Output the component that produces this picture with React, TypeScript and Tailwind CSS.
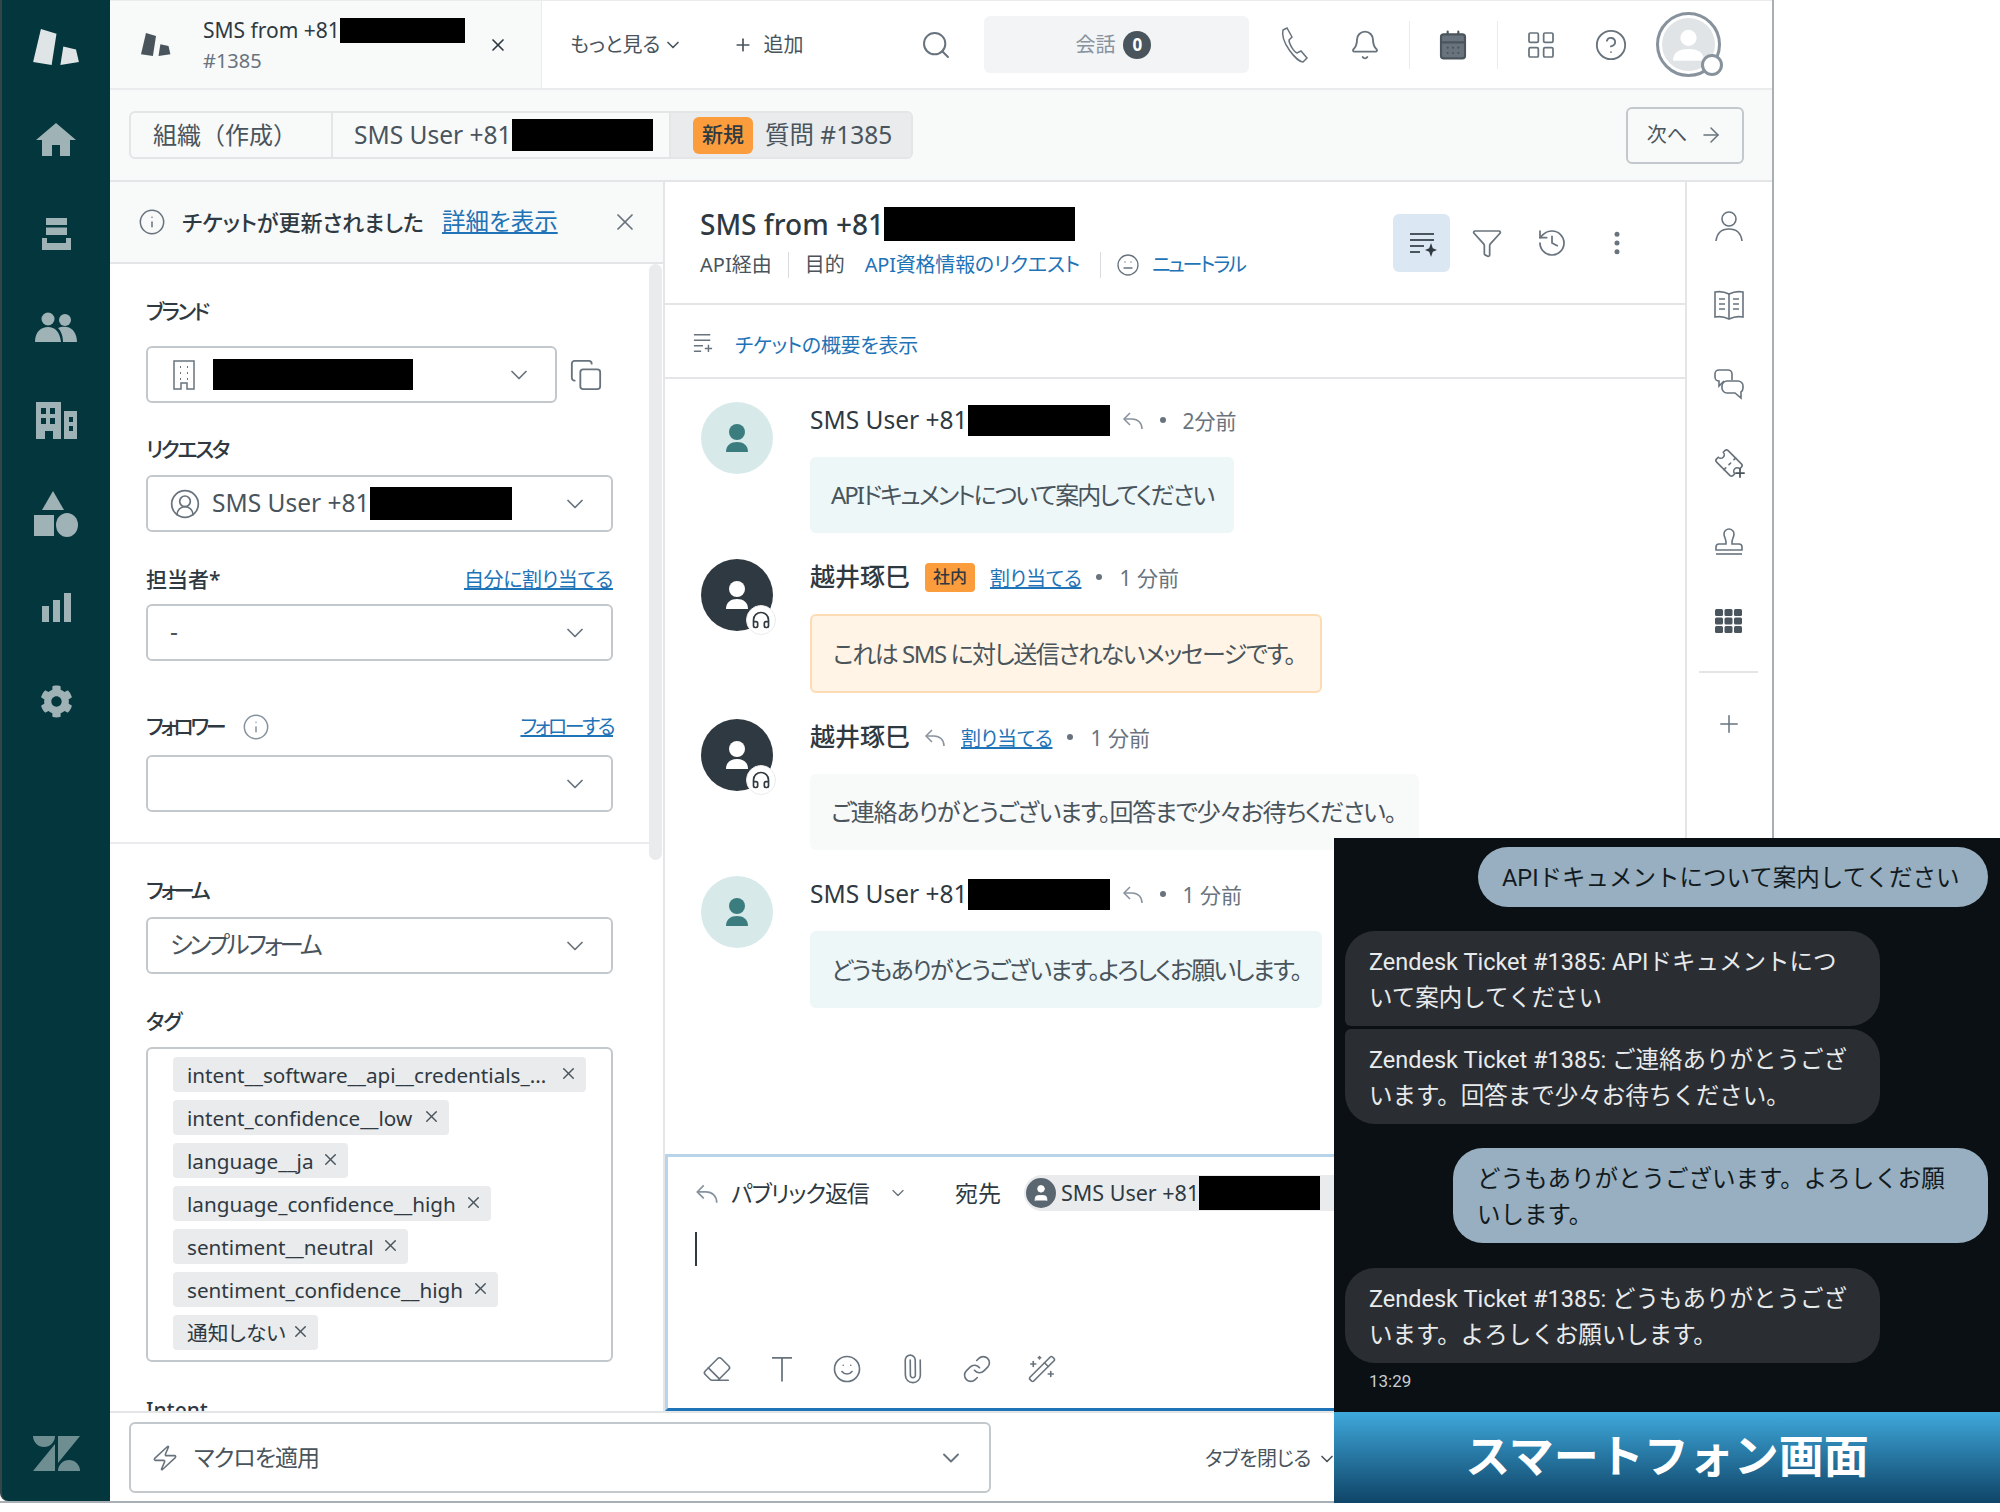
import {
  ArrowRight,
  Bell,
  CalendarDays,
  ChevronDown,
  CircleHelp,
  CircleUserRound,
  Copy,
  Eraser,
  Filter,
  Headphones,
  History,
  Info,
  LayoutGrid,
  Link,
  Meh,
  MoreVertical,
  Paperclip,
  Plus,
  Search,
  Smile,
  Ticket,
  User,
  WandSparkles,
  X,
  Zap,
} from "lucide-react";
import { FaCog } from "react-icons/fa";

const Redact = ({ w, h }: { w: number; h: number }) => (
  <span className="block shrink-0 bg-black" style={{ width: w, height: h }} />
);

// support product logo (two slanted blocks)
const SupportLogo = ({ className }: { className: string }) => (
  <svg viewBox="33 27 48 39" className={className} fill="currentColor">
    <polygon points="41,28 57,33 52,65 33,62" />
    <polygon points="64,46 77,49 80,62 61,65" />
  </svg>
);

function Sidebar() {
  const slot = "h-[93.5px] flex items-center justify-center text-[#9fb2b5]";
  return (
    <aside className="w-[110px] shrink-0 flex flex-col bg-[#03363d] border-l-2 border-[#33474b] rounded-bl-lg">
      <div className={slot}>
        <SupportLogo className="w-[47px] h-[38px] text-[#dfe5e6]" />
      </div>
      <div className={slot}>
        <svg viewBox="0 0 40 34" className="w-[40px] h-[34px]" fill="currentColor">
          <path d="M20 0 40 17H34V33H24V22H16V33H6V17H0Z" />
        </svg>
      </div>
      <div className={slot}>
        <svg viewBox="0 0 29 32" className="w-[29px] h-[32px]" fill="currentColor">
          <path d="M4 0H25V7H4ZM4 9.5H25V17H4ZM0 20H5V25H24V20H29V32H0Z" />
        </svg>
      </div>
      <div className={slot}>
        <svg viewBox="0 0 42 30" className="w-[42px] h-[30px]" fill="currentColor">
          <circle cx="13" cy="7" r="6.5" />
          <circle cx="30" cy="8" r="6" />
          <path d="M0 30C0 20 6 15 13 15S25 20 26 30ZM28 30C28 24 26 19 23 16C26 14.500 29 14.500 32 15C38 16 42 22 42 30Z" />
        </svg>
      </div>
      <div className={slot}>
        <svg viewBox="0 0 41 37" className="w-[41px] h-[37px]" fill="currentColor" fillRule="evenodd">
          <path d="M0 0H25V37H17V29H9V37H0ZM5 6V12H10V6ZM14 6V12H19V6ZM5 16V22H10V16ZM14 16V22H19V16Z" />
          <path d="M28 9H41V37H28ZM33 15V20H37V15ZM33 24V29H37V24Z" />
        </svg>
      </div>
      <div className={slot}>
        <svg viewBox="0 0 44 46" className="w-[44px] h-[46px]" fill="currentColor">
          <path d="M19 0 30 19H8Z" />
          <rect x="0" y="24" width="20" height="21" />
          <ellipse cx="33" cy="34" rx="11" ry="12" />
        </svg>
      </div>
      <div className={slot}>
        <svg viewBox="0 0 29 29" className="w-[29px] h-[29px]" fill="currentColor">
          <rect x="0" y="13" width="7" height="16" />
          <rect x="11" y="7" width="7" height="22" />
          <rect x="22" y="0" width="7" height="29" />
        </svg>
      </div>
      <div className={slot}>
        <FaCog className="w-[33px] h-[33px]" />
      </div>
      <div className="mt-auto mb-[30px] flex justify-center text-[#6f8e92]">
        <svg viewBox="0 0 47 35" className="w-[47px] h-[35px]" fill="currentColor">
          <path d="M0 0H22A11 11 0 0 1 0 0Z" />
          <path d="M25 0H47L25 27Z" />
          <path d="M22 8V35H0Z" />
          <path d="M25 35A11 11 0 0 1 47 35Z" />
        </svg>
      </div>
    </aside>
  );
}

function Header() {
  const ic = "text-[#68737d]";
  return (
    <header className="h-[90px] shrink-0 flex border-t border-[#e9ebed]">
      <div className="w-[431px] shrink-0 flex items-center bg-[#f8f9f9] border-b-2 border-[#e9ebed]">
        <SupportLogo className="ml-[31px] w-[30px] h-[25px] text-[#49545c]" />
        <div className="ml-[32px] w-[270px]">
          <div className="h-[32px] flex items-center text-[21px] text-[#2f3941] whitespace-nowrap">
            SMS from +81
            <Redact w={125} h={25} />
          </div>
          <div className="text-[20px] leading-[28px] text-[#68737d]">#1385</div>
        </div>
        <X className="ml-[15px] w-[20px] h-[20px] text-[#2f3941]" />
      </div>
      <div className="flex-1 flex items-center bg-white border-b-2 border-[#e9ebed] border-l border-l-[#e9ebed]">
        <span className="ml-[28px] text-[20px] text-[#49545c]">もっと見る</span>
        <ChevronDown className="ml-[3px] w-[20px] h-[20px] text-[#49545c]" />
        <Plus className="ml-[50px] w-[20px] h-[20px] text-[#49545c]" />
        <span className="ml-[10px] text-[20px] text-[#49545c]">追加</span>
        <Search className={`ml-[117px] w-[32px] h-[32px] ${ic}`} strokeWidth={1.5} />
        <div className="ml-[32px] w-[265px] h-[57px] rounded-md bg-[#f3f4f5] flex items-center">
          <span className="ml-[91px] text-[20px] text-[#87929d]">会話</span>
          <span className="ml-[8px] w-[28px] h-[28px] rounded-full bg-[#49545c] text-white text-[17px] font-bold flex items-center justify-center">
            0
          </span>
        </div>
        <svg viewBox="0 0 32 36" className={`ml-[28px] w-[32px] h-[36px] ${ic}`} fill="none" stroke="currentColor" strokeWidth="1.5">
          <path d="M6 3 10 1 15 10 12 13C12 17 17 25 20 26L24 24 30 31 26 35C20 35 3 15 6 3Z" />
        </svg>
        <Bell className={`ml-[40px] w-[32px] h-[32px] ${ic}`} strokeWidth={1.4} />
        <span className="ml-[28px] w-px h-[48px] bg-[#e9ebed]" />
        <CalendarDays className="ml-[27px] w-[32px] h-[32px] text-[#49545c] fill-[#68737d]" strokeWidth={1.6} />
        <span className="ml-[28px] w-px h-[48px] bg-[#e9ebed]" />
        <LayoutGrid className={`ml-[27px] w-[32px] h-[32px] ${ic}`} strokeWidth={1.3} />
        <CircleHelp className={`ml-[37px] w-[34px] h-[34px] ${ic}`} strokeWidth={1.3} />
        <div className="relative ml-[28px] w-[65px] h-[65px] rounded-full border-[3px] border-[#87929d] p-[3px]">
          <div className="w-full h-full rounded-full bg-[#e1e4e6] flex items-center justify-center overflow-hidden">
            <svg viewBox="0 0 72 72" className="w-[53px] h-[53px]" fill="#fff">
              <circle cx="36" cy="27" r="11" />
              <path d="M15 58C15 46 24 42 36 42S57 46 57 58Z" />
            </svg>
          </div>
          <span className="absolute right-[-5px] bottom-[-2px] w-[22px] h-[22px] rounded-full bg-white border-[3px] border-[#87929d]" />
        </div>
      </div>
    </header>
  );
}

function Crumbs() {
  return (
    <div className="h-[92px] shrink-0 flex items-center justify-between bg-[#f8f9f9] border-b-2 border-[#e3e5e7] pl-[19px] pr-[28px]">
      <div className="flex h-[48px] w-[784px] border-2 border-[#e3e5e7] rounded-md overflow-hidden bg-[#f8f9f9] text-[24.500px] text-[#49545c] whitespace-nowrap">
        <div className="w-[202px] pl-[22px] flex items-center border-r-2 border-[#e3e5e7] text-[24px] [font-feature-settings:normal]">組織（作成）</div>
        <div className="w-[338px] pl-[21px] flex items-center border-r-2 border-[#e3e5e7]">
          SMS User +81
          <Redact w={141} h={32} />
        </div>
        <div className="flex-1 flex items-center bg-[#e9ebed] pl-[22px]">
          <span className="w-[60px] h-[37px] rounded-md bg-[#fb9d3c] text-[#2f3941] text-[21px] font-medium flex items-center justify-center">
            新規
          </span>
          <span className="ml-[12px]">質問 #1385</span>
        </div>
      </div>
      <div className="w-[118px] h-[57px] rounded-md border-2 border-[#c2c8cc] flex items-center justify-center gap-[12px] text-[20px] text-[#49545c]">
        次へ
        <ArrowRight className="w-[24px] h-[24px] text-[#68737d]" strokeWidth={1.5} />
      </div>
    </div>
  );
}

function Label({ children, right, rightClass }: { children: React.ReactNode; right?: string; rightClass?: string }) {
  return (
    <div className="h-[28px] w-[467px] flex items-center justify-between text-[21px] font-medium text-[#2f3941]">
      <div className="flex items-center">{children}</div>
      {right && <a className={`text-[20px] font-normal text-[#1f73b7] underline ${rightClass}`}>{right}</a>}
    </div>
  );
}

function Select({ className, children }: { className: string; children?: React.ReactNode }) {
  return (
    <div className={`${className} h-[57px] rounded-md border-2 border-[#c2c8cc] bg-white flex items-center pr-[22px] text-[24.500px] text-[#49545c]`}>
      <div className="flex-1 flex items-center min-w-0">{children}</div>
      <ChevronDown className="w-[28px] h-[28px] text-[#68737d]" strokeWidth={1.5} />
    </div>
  );
}

const tags = [
  ["intent__software__api__credentials_...", 413],
  ["intent_confidence__low", 276],
  ["language__ja", 175],
  ["language_confidence__high", 318],
  ["sentiment__neutral", 235],
  ["sentiment_confidence__high", 325],
  ["通知しない", 145],
] as const;

function LeftPanel() {
  return (
    <div className="w-[555px] shrink-0 flex flex-col border-r-2 border-[#e3e5e7]">
      <div className="h-[82px] shrink-0 flex items-center bg-[#f8f9f9] border-b-2 border-[#e3e5e7]">
        <Info className="ml-[28px] w-[28px] h-[28px] text-[#68737d]" strokeWidth={1.3} />
        <span className="ml-[16px] w-[244px] whitespace-nowrap text-[22px] font-medium text-[#2f3941]">
          チケットが更新されました
        </span>
        <a className="ml-[16px] text-[23.500px] text-[#1f73b7] underline">詳細を表示</a>
        <X className="ml-[53px] w-[28px] h-[28px] text-[#68737d]" strokeWidth={1.5} />
      </div>
      <div className="relative flex-1 overflow-hidden">
        <span className="absolute right-[1px] top-0 w-[13px] h-[596px] rounded-full bg-[#e9ebed]" />
        <div className="pl-[36px]">
          <div className="mt-[34px] tracking-[-2.6px]">
            <Label>ブランド</Label>
          </div>
          <div className="mt-[20px] flex items-center">
            <Select className="w-[411px] pl-[25px]">
              <svg viewBox="0 0 22 30" className="w-[22px] h-[30px] text-[#68737d]" fill="none" stroke="currentColor" strokeWidth="1.5">
                <path d="M1 1H21V29H14V23H8V29H1Z" />
                <path d="M7 7H8M14 7H15M7 13H8M14 13H15M7 19H8M14 19H15" strokeWidth="2" />
              </svg>
              <span className="ml-[18px]">
                <Redact w={200} h={31} />
              </span>
            </Select>
            <Copy className="ml-[12px] w-[34px] h-[34px] text-[#68737d]" strokeWidth={1.3} />
          </div>
          <div className="mt-[33px] tracking-[-2.3px]">
            <Label>リクエスタ</Label>
          </div>
          <div className="mt-[11px]">
            <Select className="w-[467px] pl-[21px]">
              <CircleUserRound className="w-[32px] h-[32px] text-[#68737d]" strokeWidth={1.3} />
              <span className="ml-[11px] whitespace-nowrap flex items-center">
                SMS User +81
                <Redact w={142} h={33} />
              </span>
            </Select>
          </div>
          <div className="mt-[34px]">
            <Label right="自分に割り当てる" rightClass="tracking-[-0.4px]">担当者*</Label>
          </div>
          <div className="mt-[10px]">
            <Select className="w-[467px] pl-[22px]">-</Select>
          </div>
          <div className="mt-[52px]">
            <Label right="フォローする" rightClass="tracking-[-2.5px]">
              <span className="tracking-[-3.3px]">フォロワー</span>
              <Info className="ml-[19px] w-[28px] h-[28px] text-[#87929d]" strokeWidth={1.3} />
            </Label>
          </div>
          <div className="mt-[14px]">
            <Select className="w-[467px]" />
          </div>
        </div>
        <div className="mt-[30px] mr-[14px] h-[2px] bg-[#e9ebed]" />
        <div className="pl-[36px]">
          <div className="mt-[33px] tracking-[-3px]">
            <Label>フォーム</Label>
          </div>
          <div className="mt-[12px]">
            <Select className="w-[467px] pl-[22px]">
              <span className="tracking-[-3.2px]">シンプルフォーム</span>
            </Select>
          </div>
          <div className="mt-[34px] tracking-[-1px]">
            <Label>タグ</Label>
          </div>
          <div className="mt-[11px] w-[467px] h-[315px] rounded-md border-2 border-[#c2c8cc] pt-[8px] pl-[25px] flex flex-col items-start gap-[8px]">
            {tags.map(([t, w]) => (
              <div
                key={t}
                className="h-[35px] rounded bg-[#e9ebed] pl-[14px] pr-[8px] flex items-center justify-between text-[20.700px] text-[#2f3941] whitespace-nowrap"
                style={{ width: w }}
              >
                <span className="pt-[2px]">{t}</span>
                <X className="w-[19px] h-[19px] mb-[3px] text-[#49545c]" strokeWidth={1.8} />
              </div>
            ))}
          </div>
          <div className="mt-[35px]">
            <Label>Intent</Label>
          </div>
        </div>
      </div>
    </div>
  );
}

const ReplyIcon = ({ className }: { className: string }) => (
  <svg viewBox="0 0 24 24" className={className} fill="none" stroke="currentColor" strokeWidth="1.5">
    <path d="M9 5 3 11 9 17" />
    <path d="M3 11H11C17 11 21 15 21 21" />
  </svg>
);

function Avatar({ agent }: { agent?: boolean }) {
  return (
    <div className={`relative w-[72px] h-[72px] shrink-0 rounded-full ${agent ? "bg-[#2f3941]" : "bg-[#d7e9e9]"}`}>
      <svg viewBox="0 0 72 72" className="w-[72px] h-[72px]" fill={agent ? "#fff" : "#3b7d7f"}>
        <circle cx="36" cy="30" r="8" />
        <path d="M25 50C25 43 30 40 36 40S47 43 47 50Z" />
      </svg>
      {agent && (
        <span className="absolute left-[45px] top-[46px] w-[30px] h-[30px] rounded-full bg-white border border-[#e9ebed] flex items-center justify-center">
          <Headphones className="w-[20px] h-[20px] text-[#2f3941]" strokeWidth={2} />
        </span>
      )}
    </div>
  );
}

function Dot() {
  return <span className="block w-[6px] h-[6px] rounded-full bg-[#68737d]" />;
}

function Message({ agent, head, bubble, height, width, text, tr }: {
  agent?: boolean;
  head: React.ReactNode;
  bubble: string;
  height: number;
  width: number;
  text: string;
  tr: string;
}) {
  return (
    <div className="flex">
      <Avatar agent={agent} />
      <div className="ml-[37px]">
        <div className="h-[36px] flex items-center text-[24.500px] text-[#2f3941] whitespace-nowrap">{head}</div>
        <div
          className={`mt-[19px] flex items-center pl-[21px] rounded-md text-[24px] text-[#49545c] whitespace-nowrap ${bubble}`}
          style={{ height, width }}
        >
          <span className={tr}>{text}</span>
        </div>
      </div>
    </div>
  );
}

const Assign = () => <a className="text-[20px] text-[#1f73b7] underline tracking-[-0.3px]">割り当てる</a>;
const Ago = ({ t }: { t: string }) => <span className="text-[21px] text-[#68737d]">{t}</span>;

function Middle() {
  return (
    <div className="flex-1 min-w-0 flex flex-col">
      <div className="h-[123px] shrink-0 flex items-center justify-between border-b-2 border-[#e3e5e7]">
        <div className="pl-[35px]">
          <div className="h-[36px] flex items-center text-[28px] font-medium text-[#2f3941] whitespace-nowrap">
            SMS from +81
            <Redact w={191} h={34} />
          </div>
          <div className="mt-[9px] h-[28px] flex items-center text-[20px] text-[#49545c] whitespace-nowrap">
            API経由
            <span className="mx-[16px] w-px h-[26px] bg-[#d8dcde]" />
            目的
            <a className="ml-[20px] text-[#1f73b7] tracking-[-0.2px]">API資格情報のリクエスト</a>
            <span className="ml-[20px] mr-[15px] w-px h-[26px] bg-[#d8dcde]" />
            <Meh className="w-[24px] h-[24px] text-[#68737d]" strokeWidth={1.3} />
            <a className="ml-[12px] text-[#1f73b7] tracking-[-2.3px]">ニュートラル</a>
          </div>
        </div>
        <div className="flex items-center pr-[36px]">
          <div className="w-[65px] flex justify-center">
            <div className="w-[57px] h-[58px] rounded-md bg-[#dbe7f2] flex items-center justify-center">
              <svg viewBox="0 0 30 30" className="w-[30px] h-[30px]" stroke="#49545c" strokeWidth="2" fill="none">
                <path d="M3 6H27M3 12H27M3 18H17M3 24H13" />
                <path d="M24 15 25.800 20.200 30 22 25.800 23.800 24 29 22.200 23.800 18 22 22.200 20.200Z" fill="#2f3941" stroke="none" />
              </svg>
            </div>
          </div>
          <div className="w-[65px] flex justify-center">
            <Filter className="w-[32px] h-[32px] text-[#68737d]" strokeWidth={1.3} />
          </div>
          <div className="w-[65px] flex justify-center">
            <History className="w-[32px] h-[32px] text-[#68737d]" strokeWidth={1.3} />
          </div>
          <div className="w-[65px] flex justify-center">
            <MoreVertical className="w-[30px] h-[30px] text-[#68737d]" strokeWidth={2} />
          </div>
        </div>
      </div>
      <div className="h-[74px] shrink-0 flex items-center border-b-2 border-[#e3e5e7] pl-[28px] pt-[9px]">
        <svg viewBox="0 0 22 24" className="w-[20px] h-[22px] mb-[6px]" stroke="#68737d" strokeWidth="1.6" fill="none">
          <path d="M1 3H19M1 9H19M1 15H11M1 21H9M17 14V22M13 18H21" />
        </svg>
        <a className="ml-[22px] text-[20px] text-[#1f73b7] tracking-[-0.3px]">チケットの概要を表示</a>
      </div>
      <div className="flex-1 min-h-0 overflow-hidden pl-[36px] pt-[23px] flex flex-col gap-[26px]">
        <Message
          head={
            <>
              SMS User +81
              <Redact w={142} h={31} />
              <ReplyIcon className="ml-[11px] w-[24px] h-[24px] text-[#87929d]" />
              <span className="ml-[15px]"><Dot /></span>
              <span className="ml-[17px]"><Ago t="2分前" /></span>
            </>
          }
          bubble="bg-[#edf7f8]"
          height={76}
          width={424}
          tr="tracking-[-2px]"
          text="APIドキュメントについて案内してください"
        />
        <Message
          agent
          head={
            <>
              <span className="text-[25px] font-medium">越井琢巳</span>
              <span className="ml-[15px] w-[50px] h-[29px] rounded bg-[#fb9d3c] text-[17px] text-[#2f3941] font-medium flex items-center justify-center">
                社内
              </span>
              <span className="ml-[15px]"><Assign /></span>
              <span className="ml-[15px]"><Dot /></span>
              <span className="ml-[17px]"><Ago t="1 分前" /></span>
            </>
          }
          bubble="bg-[#fff4e5] border-2 border-[#fcdcb4]"
          height={79}
          width={512}
          tr="tracking-[-1.5px]"
          text="これは SMS に対し送信されないメッセージです。"
        />
        <Message
          agent
          head={
            <>
              <span className="text-[25px] font-medium">越井琢巳</span>
              <ReplyIcon className="ml-[13px] w-[24px] h-[24px] text-[#87929d]" />
              <span className="ml-[14px]"><Assign /></span>
              <span className="ml-[15px]"><Dot /></span>
              <span className="ml-[17px]"><Ago t="1 分前" /></span>
            </>
          }
          bubble="bg-[#f8f9f9]"
          height={76}
          width={609}
          tr="tracking-[-1.3px]"
          text="ご連絡ありがとうございます。回答まで少々お待ちください。"
        />
        <Message
          head={
            <>
              SMS User +81
              <Redact w={142} h={31} />
              <ReplyIcon className="ml-[11px] w-[24px] h-[24px] text-[#87929d]" />
              <span className="ml-[15px]"><Dot /></span>
              <span className="ml-[17px]"><Ago t="1 分前" /></span>
            </>
          }
          bubble="bg-[#edf7f8]"
          height={77}
          width={512}
          tr="tracking-[-1.8px]"
          text="どうもありがとうございます。よろしくお願いします。"
        />
      </div>
      <div className="h-[257px] shrink-0 border-[3px] border-[#b9d4e9] border-b-[#1f73b7] bg-white">
        <div className="mt-[18px] h-[36px] flex items-center pl-[26px] text-[23px] text-[#2f3941] whitespace-nowrap">
          <ReplyIcon className="w-[26px] h-[26px] text-[#87929d]" />
          <span className="ml-[11px] w-[137px] tracking-[-1.1px]">パブリック返信</span>
          <ChevronDown className="ml-[20px] w-[20px] h-[20px] text-[#68737d]" strokeWidth={1.6} />
          <span className="ml-[47px] w-[50px]">宛先</span>
          <div className="ml-[19px] h-[36px] w-[340px] rounded-full bg-[#e9ebed] flex items-center pl-[2px] text-[21.500px]">
            <span className="w-[30px] h-[30px] rounded-full bg-[#5b6770] flex items-center justify-center">
              <User className="w-[20px] h-[20px] text-white fill-white" strokeWidth={1} />
            </span>
            <span className="ml-[5px]">SMS User +81</span>
            <Redact w={121} h={34} />
          </div>
        </div>
        <div className="ml-[27px] mt-[21px] w-[2px] h-[34px] bg-[#2f3941]" />
        <div className="mt-[88px] ml-[16px] flex">
          <div className="w-[65px] flex justify-center">
            <Eraser className="w-[30px] h-[30px] text-[#68737d]" strokeWidth={1.3} />
          </div>
          <div className="w-[65px] flex justify-center">
            <svg viewBox="0 0 24 24" className="w-[30px] h-[30px] text-[#68737d]" fill="none" stroke="currentColor" strokeWidth="1.4">
              <path d="M4 3H20M12 3V22" />
            </svg>
          </div>
          <div className="w-[65px] flex justify-center">
            <Smile className="w-[30px] h-[30px] text-[#68737d]" strokeWidth={1.3} />
          </div>
          <div className="w-[65px] flex justify-center">
            <Paperclip className="w-[30px] h-[30px] -rotate-45 text-[#68737d]" strokeWidth={1.3} />
          </div>
          <div className="w-[65px] flex justify-center">
            <Link className="w-[30px] h-[30px] text-[#68737d]" strokeWidth={1.3} />
          </div>
          <div className="w-[65px] flex justify-center">
            <WandSparkles className="w-[30px] h-[30px] text-[#68737d]" strokeWidth={1.3} />
          </div>
        </div>
      </div>
    </div>
  );
}

function Rail() {
  const slot = "h-[79px] flex items-center justify-center text-[#68737d]";
  return (
    <div className="w-[87px] shrink-0 border-l-2 border-[#e3e5e7] pt-[4px] pr-[2px] flex flex-col">
      <div className={slot}>
        <svg viewBox="0 0 30 32" className="w-[30px] h-[32px]" fill="none" stroke="currentColor" strokeWidth="1.6">
          <circle cx="15" cy="9" r="7" />
          <path d="M2 31C3 23 8 19 15 19S27 23 28 31" />
        </svg>
      </div>
      <div className={slot}>
        <svg viewBox="0 0 32 32" className="w-[32px] h-[32px]" fill="none" stroke="currentColor" strokeWidth="1.6">
          <path d="M2 3C7 2 12 3 16 5C20 3 25 2 30 3V28C25 27 20 28 16 30C12 28 7 27 2 28Z" />
          <path d="M16 5V30M6 10H12M6 15H12M6 20H12M20 10H26M20 15H26M20 20H26" />
        </svg>
      </div>
      <div className={slot}>
        <svg viewBox="0 0 32 32" className="w-[32px] h-[32px]" fill="none" stroke="currentColor" strokeWidth="1.6">
          <path d="M19 12V6A4 4 0 0 0 15 2H6A4 4 0 0 0 2 6V9A4 4 0 0 0 6 13L6 18L11 13" />
          <path d="M14 13H25A5 5 0 0 1 30 18V20A5 5 0 0 1 28 24V30L22 25H14A5 5 0 0 1 9 20V18A5 5 0 0 1 14 13Z" />
        </svg>
      </div>
      <div className={slot}>
        <span className="relative">
          <Ticket className="w-[28px] h-[28px] rotate-45" strokeWidth={1.4} />
          <Plus className="absolute right-[-4px] bottom-[-3px] w-[14px] h-[14px] text-[#49545c]" strokeWidth={3} />
        </span>
      </div>
      <div className={slot}>
        <svg viewBox="0 0 30 30" className="w-[30px] h-[30px]" fill="none" stroke="currentColor" strokeWidth="1.6">
          <path d="M12 15C12 12 10 10 10 7A5 5 0 0 1 20 7C20 10 18 12 18 15V17H25A3 3 0 0 1 28 20V23H2V20A3 3 0 0 1 5 17H12Z" />
          <path d="M2 27H28" />
        </svg>
      </div>
      <div className={slot}>
        <svg viewBox="0 0 27 24" className="w-[27px] h-[24px]" fill="#49545c">
          {[0, 9.5, 19].flatMap((x) =>
            [0, 8.5, 17].map((y) => <rect key={`${x}-${y}`} x={x} y={y} width="8" height="7" rx="1.500" />)
          )}
        </svg>
      </div>
      <div className="mx-[12px] mt-[11px] h-[2px] bg-[#e3e5e7]" />
      <div className="h-[102px] flex items-center justify-center">
        <Plus className="w-[28px] h-[28px] text-[#68737d]" strokeWidth={1.3} />
      </div>
    </div>
  );
}

function Footer() {
  return (
    <div className="h-[90px] shrink-0 border-t-2 border-[#e3e5e7] flex items-start pl-[19px] bg-white">
      <div className="mt-[9px] w-[862px] h-[71px] rounded-md border-2 border-[#c2c8cc] flex items-center pl-[20px] pr-[24px] text-[23px] text-[#49545c]">
        <Zap className="w-[28px] h-[32px] -skew-x-6 text-[#68737d]" strokeWidth={1.4} />
        <span className="ml-[15px] flex-1 tracking-[-1px]">マクロを適用</span>
        <ChevronDown className="w-[28px] h-[28px] text-[#68737d]" strokeWidth={1.6} />
      </div>
      <div className="ml-[214px] mt-[31px] flex items-center text-[20px] text-[#49545c] whitespace-nowrap tracking-[-0.5px]">
        タブを閉じる
        <ChevronDown className="ml-[6px] w-[20px] h-[20px]" />
      </div>
    </div>
  );
}

function PhoneBubble({ self, className, lines }: { self?: boolean; className: string; lines: string[] }) {
  return (
    <div
      className={`${className} flex flex-col justify-center px-[24px] pt-[2px] leading-[36px] whitespace-nowrap ${
        self
          ? "self-end bg-[#97afc0] text-[#121a20] rounded-[30px]"
          : "bg-[#2a2e33] text-[#e8eaec] w-[535px] rounded-[30px]"
      }`}
    >
      {lines.map((l) => (
        <div key={l}>{l}</div>
      ))}
    </div>
  );
}

function PhonePanel() {
  return (
    <div className="absolute left-[1334px] top-[838px] w-[666px] h-[665px] flex flex-col bg-[#0a1014] font-['Roboto','Noto_Sans_CJK_JP',sans-serif] [font-feature-settings:normal] text-[23.500px]">
      <div className="flex-1 flex flex-col pl-[11px] pr-[12px]">
        <PhoneBubble self className="mt-[9px] h-[60px] w-[510px]" lines={["APIドキュメントについて案内してください"]} />
        <PhoneBubble
          className="mt-[24px] h-[95px] rounded-bl-[6px]"
          lines={["Zendesk Ticket #1385: APIドキュメントにつ", "いて案内してください"]}
        />
        <PhoneBubble
          className="mt-[3px] h-[95px] rounded-tl-[6px]"
          lines={["Zendesk Ticket #1385: ご連絡ありがとうござ", "います。回答まで少々お待ちください。"]}
        />
        <PhoneBubble
          self
          className="mt-[24px] h-[95px] w-[535px]"
          lines={["どうもありがとうございます。よろしくお願", "いします。"]}
        />
        <PhoneBubble
          className="mt-[25px] h-[95px]"
          lines={["Zendesk Ticket #1385: どうもありがとうござ", "います。よろしくお願いします。"]}
        />
        <div className="mt-[8px] pl-[24px] text-[17px] leading-[20px] text-[#c9ced2]">13:29</div>
      </div>
      <div className="h-[91px] shrink-0 flex items-center justify-center pb-[8px] bg-gradient-to-b from-[#3fa9dc] to-[#0f4568] text-white text-[45px] font-bold font-['Noto_Sans_CJK_JP',sans-serif]">
        スマートフォン画面
      </div>
    </div>
  );
}

export default function App() {
  return (
    <div className="relative w-[2000px] h-[1512px] overflow-hidden bg-white font-['Noto_Sans','Noto_Sans_CJK_JP',sans-serif] [font-feature-settings:'palt']">
      <div className="flex w-[1774px] h-[1503px] border-r-2 border-b-2 border-[#a9b0b5]">
        <Sidebar />
        <main className="flex-1 min-w-0 flex flex-col">
          <Header />
          <Crumbs />
          <div className="flex-1 min-h-0 flex">
            <LeftPanel />
            <Middle />
            <Rail />
          </div>
          <Footer />
        </main>
      </div>
      <PhonePanel />
    </div>
  );
}
